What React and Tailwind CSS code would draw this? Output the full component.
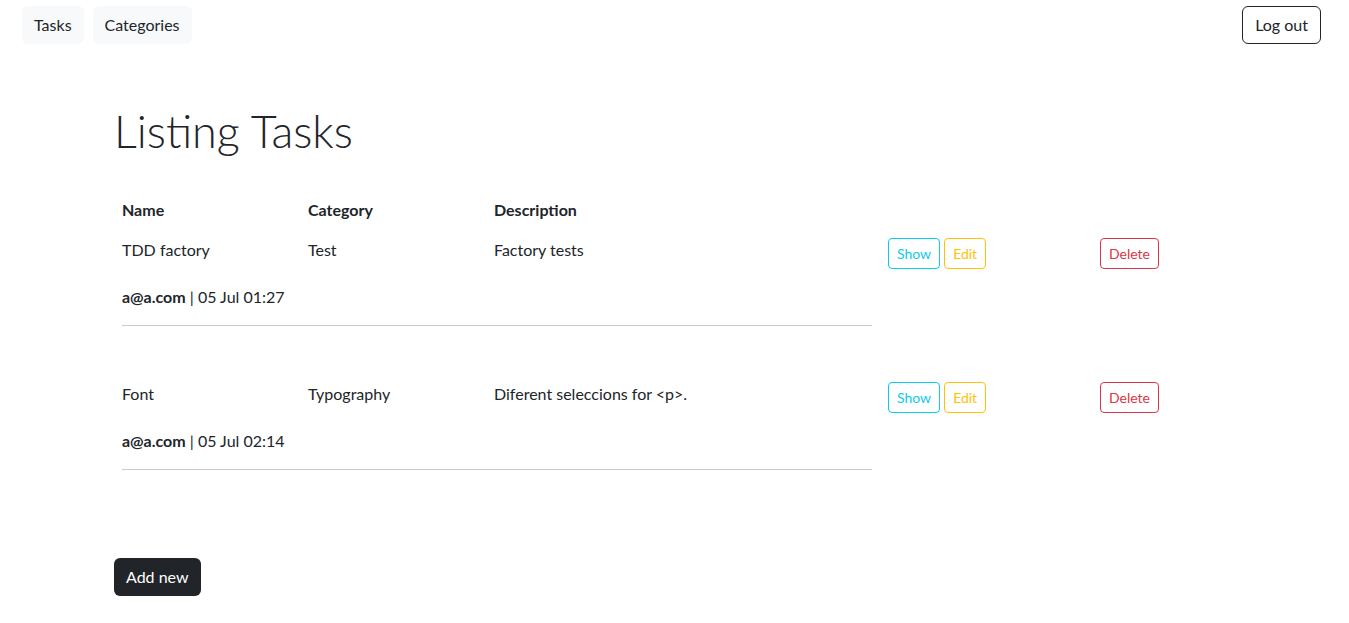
import React from "react";

const tasks = [
  {
    name: "TDD factory",
    category: "Test",
    description: "Factory tests",
    user: "a@a.com",
    date: "05 Jul 01:27",
  },
  {
    name: "Font",
    category: "Typography",
    description: "Diferent seleccions for <p>.",
    user: "a@a.com",
    date: "05 Jul 02:14",
  },
];

const TaskRow = ({ task }) => {
  return (
    <div className="mb-[48px]">
      <div className="grid grid-cols-[186px_186px_186px_208px_212px_auto]">
        <div className="p-2">{task.name}</div>
        <div className="p-2">{task.category}</div>
        <div className="p-2 whitespace-nowrap">{task.description}</div>
        <div className="p-2"></div>
        <div className="p-2 flex gap-1 items-start">
          <button className="border border-[#0dcaf0] text-[#0dcaf0] text-sm leading-[21px] px-2 py-1 rounded">
            Show
          </button>
          <button className="border border-[#ffc107] text-[#ffc107] text-sm leading-[21px] px-2 py-1 rounded">
            Edit
          </button>
        </div>
        <div className="p-2 flex items-start">
          <button className="border border-[#dc3545] text-[#dc3545] text-sm leading-[21px] px-2 py-1 rounded">
            Delete
          </button>
        </div>
      </div>
      <div className="w-[766px] p-2 pb-0">
        <div>
          <strong>{task.user}</strong> | {task.date}
        </div>
        <hr className="mt-4 border-t border-[#c8c9ca]" />
      </div>
    </div>
  );
};

export default function App() {
  return (
    <div className="min-h-screen bg-white text-[#212529] text-base leading-6 font-['Lato','Noto_Sans',sans-serif]">
      <nav className="flex items-center justify-between pl-[22px] pr-[28px] pt-[6px]">
        <div className="flex gap-[9px]">
          <button className="bg-[#f8f9fa] px-3 py-[7px] rounded-md">Tasks</button>
          <button className="bg-[#f8f9fa] px-3 py-[7px] rounded-md">Categories</button>
        </div>
        <button className="border border-[#212529] px-3 py-[6px] rounded-md">Log out</button>
      </nav>

      <main className="pl-[114px] pt-[60px]">
        <h1 className="text-[45px] font-light leading-[54px] mb-[32px]">Listing Tasks</h1>

        <div className="grid grid-cols-[186px_186px_186px] font-bold">
          <div className="p-2">Name</div>
          <div className="p-2">Category</div>
          <div className="p-2">Description</div>
        </div>

        {tasks.map((task) => (
          <TaskRow key={task.name} task={task} />
        ))}

        <button className="mt-[40px] bg-[#212529] text-white px-3 py-[7px] rounded-md">
          Add new
        </button>
      </main>
    </div>
  );
}
